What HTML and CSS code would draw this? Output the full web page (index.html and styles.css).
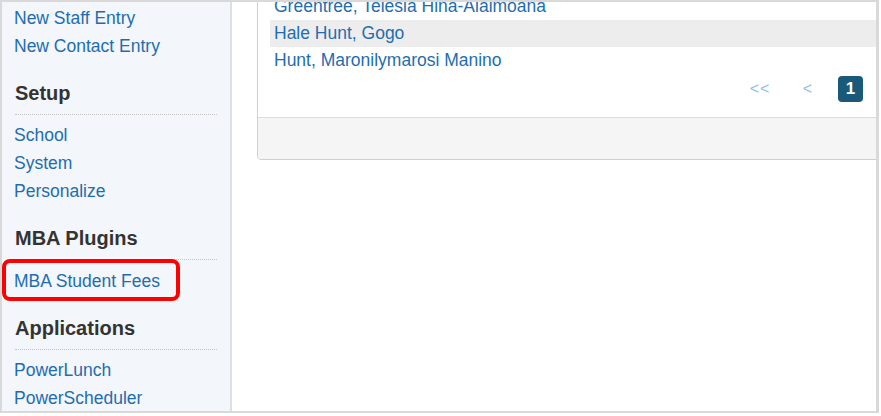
FILE: index.html
```html
<!DOCTYPE html>
<html>
<head>
<meta charset="utf-8">
<link rel="stylesheet" href="styles.css">
</head>
<body>
<div class="frame">
  <nav class="sidebar">
    <a class="nav-link" href="#">New Staff Entry</a>
    <a class="nav-link" href="#">New Contact Entry</a>
    <h3 class="nav-heading">Setup</h3>
    <a class="nav-link" href="#">School</a>
    <a class="nav-link" href="#">System</a>
    <a class="nav-link" href="#">Personalize</a>
    <h3 class="nav-heading">MBA Plugins</h3>
    <div class="highlighted">
      <a class="nav-link" href="#">MBA Student Fees</a>
      <span class="callout"></span>
    </div>
    <h3 class="nav-heading">Applications</h3>
    <a class="nav-link" href="#">PowerLunch</a>
    <a class="nav-link" href="#">PowerScheduler</a>
  </nav>
  <main class="content">
    <section class="panel">
      <div class="panel-body">
        <div class="row"><a href="#">Greentree, Telesia Hina-Alaimoana</a></div>
        <div class="row row-hover"><a href="#">Hale Hunt, Gogo</a></div>
        <div class="row"><a href="#">Hunt, Maronilymarosi Manino</a></div>
        <div class="pager">
          <span class="pg pg-first">&lt;&lt;</span>
          <span class="pg pg-prev">&lt;</span>
          <span class="pg pg-current">1</span>
        </div>
      </div>
      <div class="panel-footer"></div>
    </section>
  </main>
</div>
</body>
</html>
```
FILE: styles.css
```css
* { box-sizing: border-box; }
html, body { margin: 0; padding: 0; background: #fff; }
body {
  font-family: "Liberation Sans", Arial, sans-serif;
  font-size: 17.5px;
}
.frame {
  width: 879px;
  height: 413px;
  border: 2px solid #d9d9d9;
  border-right-width: 3px;
  display: flex;
  overflow: hidden;
}
.sidebar {
  width: 230px;
  flex: none;
  background: #f3f6fa;
  border-right: 2px solid #dcdfe3;
  padding: 2px 0 0 12px;
  display: flex;
  flex-direction: column;
  align-items: flex-start;
}
.nav-link {
  display: block;
  line-height: 28px;
  height: 28px;
  color: #1f6db0;
  text-decoration: none;
  white-space: nowrap;
}
.nav-link:first-child { margin-top: 0; }
.nav-heading {
  align-self: stretch;
  margin: 21px 13px 6px 1px;
  padding: 0 0 9px 0;
  font-size: 20px;
  line-height: 24px;
  font-weight: bold;
  color: #333;
  border-bottom: 1px dotted #c4c4c4;
}
.highlighted { position: relative; margin-top: 1px; }
.callout {
  position: absolute;
  left: -12px;
  top: -8px;
  width: 178px;
  height: 42px;
  border: 4px solid #ff0000;
  border-radius: 8px;
}
.content {
  flex: 1;
  min-width: 0;
  background: #fff;
  padding-left: 25px;
  overflow: hidden;
}
.panel {
  margin-top: -32px;
  margin-right: -20px;
  border: 1px solid #cfcfcf;
  border-radius: 4px;
  background: #fff;
}
.panel-body { padding: 22px 0 0 12px; }
.row {
  height: 27px;
  line-height: 27px;
  padding-left: 4px;
}
.row a { color: #1f6db0; text-decoration: none; white-space: nowrap; }
.row-hover { background: #ededed; }
.pager {
  height: 43px;
  padding-top: 2px;
  padding-right: 32px;
  display: flex;
  justify-content: flex-end;
  align-items: flex-start;
}
.pg {
  height: 26px;
  line-height: 26px;
  text-align: center;
  color: #8ec0e6;
  font-size: 16px;
}
.pg-first { width: 34px; margin-right: 18px; letter-spacing: 1px; }
.pg-prev { width: 25px; margin-right: 18px; }
.pg-current {
  width: 25px;
  background: #195a7a;
  color: #fff;
  font-weight: bold;
  font-size: 17px;
  border-radius: 4px;
}
.panel-footer {
  height: 42px;
  background: #f5f5f5;
  border-top: 1px solid #dcdcdc;
  border-radius: 0 0 4px 4px;
}
```
